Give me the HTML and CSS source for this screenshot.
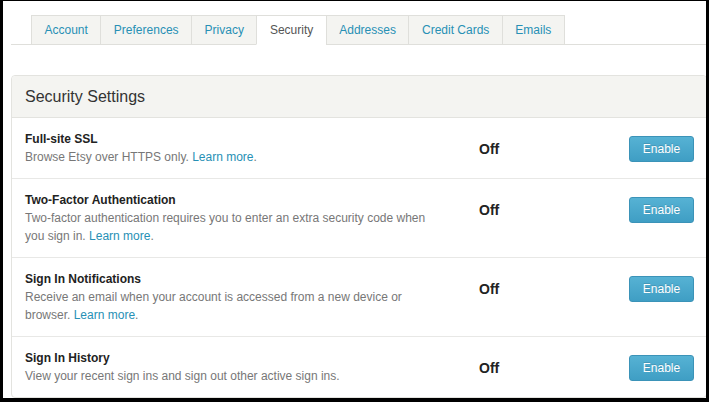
FILE: index.html
```html
<!DOCTYPE html>
<html lang="en">
<head>
    <meta charset="UTF-8">
    <title>Security Settings</title>
    <link rel="stylesheet" href="styles.css">
</head>
<body>
    <div class="janela">
        <ul class="abas">
            <li><a href="#">Account</a></li>
            <li><a href="#">Preferences</a></li>
            <li><a href="#">Privacy</a></li>
            <li class="ativa"><a href="#">Security</a></li>
            <li><a href="#">Addresses</a></li>
            <li><a href="#">Credit Cards</a></li>
            <li><a href="#">Emails</a></li>
        </ul>

        <section class="painel">
            <h2 class="painel-titulo">Security Settings</h2>

            <div class="linha">
                <div class="info">
                    <h3>Full-site SSL</h3>
                    <p>Browse Etsy over HTTPS only. <a href="#">Learn more</a>.</p>
                </div>
                <div class="estado">Off</div>
                <div class="acao"><button class="bttEnable">Enable</button></div>
            </div>

            <div class="linha">
                <div class="info">
                    <h3>Two-Factor Authentication</h3>
                    <p>Two-factor authentication requires you to enter an extra security code when you sign in. <a href="#">Learn more</a>.</p>
                </div>
                <div class="estado">Off</div>
                <div class="acao"><button class="bttEnable">Enable</button></div>
            </div>

            <div class="linha">
                <div class="info">
                    <h3>Sign In Notifications</h3>
                    <p>Receive an email when your account is accessed from a new device or browser. <a href="#">Learn more</a>.</p>
                </div>
                <div class="estado">Off</div>
                <div class="acao"><button class="bttEnable">Enable</button></div>
            </div>

            <div class="linha">
                <div class="info">
                    <h3>Sign In History</h3>
                    <p>View your recent sign ins and sign out other active sign ins.</p>
                </div>
                <div class="estado">Off</div>
                <div class="acao"><button class="bttEnable">Enable</button></div>
            </div>
        </section>
    </div>
</body>
</html>
```

FILE: styles.css
```css
html, body {
    margin: 0;
    padding: 0;
    background: #000;
}

body {
    font-family: 'Liberation Sans', Arial, sans-serif;
    padding: 1px 3px 0 3px;
}

.janela {
    background: #fff;
    height: 397px;
    overflow: hidden;
}

/* abas do topo */
.abas {
    list-style: none;
    display: flex;
    margin: 14px 0 0 8px;
    padding: 0 0 0 20px;
    border-bottom: 1px solid #dfdfdb;
}

.abas li {
    margin-bottom: -1px;
    margin-left: -1px;
}

.abas li:first-child {
    margin-left: 0;
}

.abas a {
    display: block;
    height: 28px;
    line-height: 28px;
    padding: 0 12.5px;
    font-size: 12px;
    color: #2790b5;
    text-decoration: none;
    background: #f4f4f1;
    border: 1px solid #dfdfdb;
}

.abas .ativa a {
    background: #fff;
    color: #555;
    border-bottom-color: #fff;
}

/* painel */
.painel {
    margin: 30px -1px 0 8px;
    border: 1px solid #e3e3df;
    border-radius: 4px;
}

.painel-titulo {
    margin: 0;
    height: 41px;
    line-height: 41px;
    padding: 0 13px;
    font-size: 16px;
    font-weight: normal;
    color: #333;
    background: #f4f4f1;
    border-bottom: 1px solid #e3e3df;
    border-radius: 4px 4px 0 0;
}

.linha {
    display: grid;
    grid-template-columns: 454px 1fr auto;
    padding: 12px 12px 12px 13px;
    border-bottom: 1px solid #e8e8e6;
}

.linha:last-child {
    border-bottom: none;
}

.info {
    width: 412px;
}

.info h3 {
    margin: 0;
    font-size: 12px;
    line-height: 18px;
    color: #222;
}

.info p {
    margin: 0;
    font-size: 12px;
    line-height: 18px;
    color: #777;
}

.info a {
    color: #2790b5;
    text-decoration: none;
}

.estado {
    margin-top: 6px;
    height: 26px;
    line-height: 26px;
    font-size: 14px;
    font-weight: bold;
    color: #222;
}

.acao {
    margin-top: 6px;
}

.bttEnable {
    display: block;
    width: 65px;
    height: 26px;
    padding: 0;
    font-family: inherit;
    font-size: 12px;
    color: #fff;
    text-shadow: 0 -1px 0 rgba(0, 0, 0, 0.15);
    background: linear-gradient(to bottom, #56b2d4, #3f9ec4);
    border: 1px solid #3b93b8;
    border-radius: 3px;
    cursor: pointer;
}
```
